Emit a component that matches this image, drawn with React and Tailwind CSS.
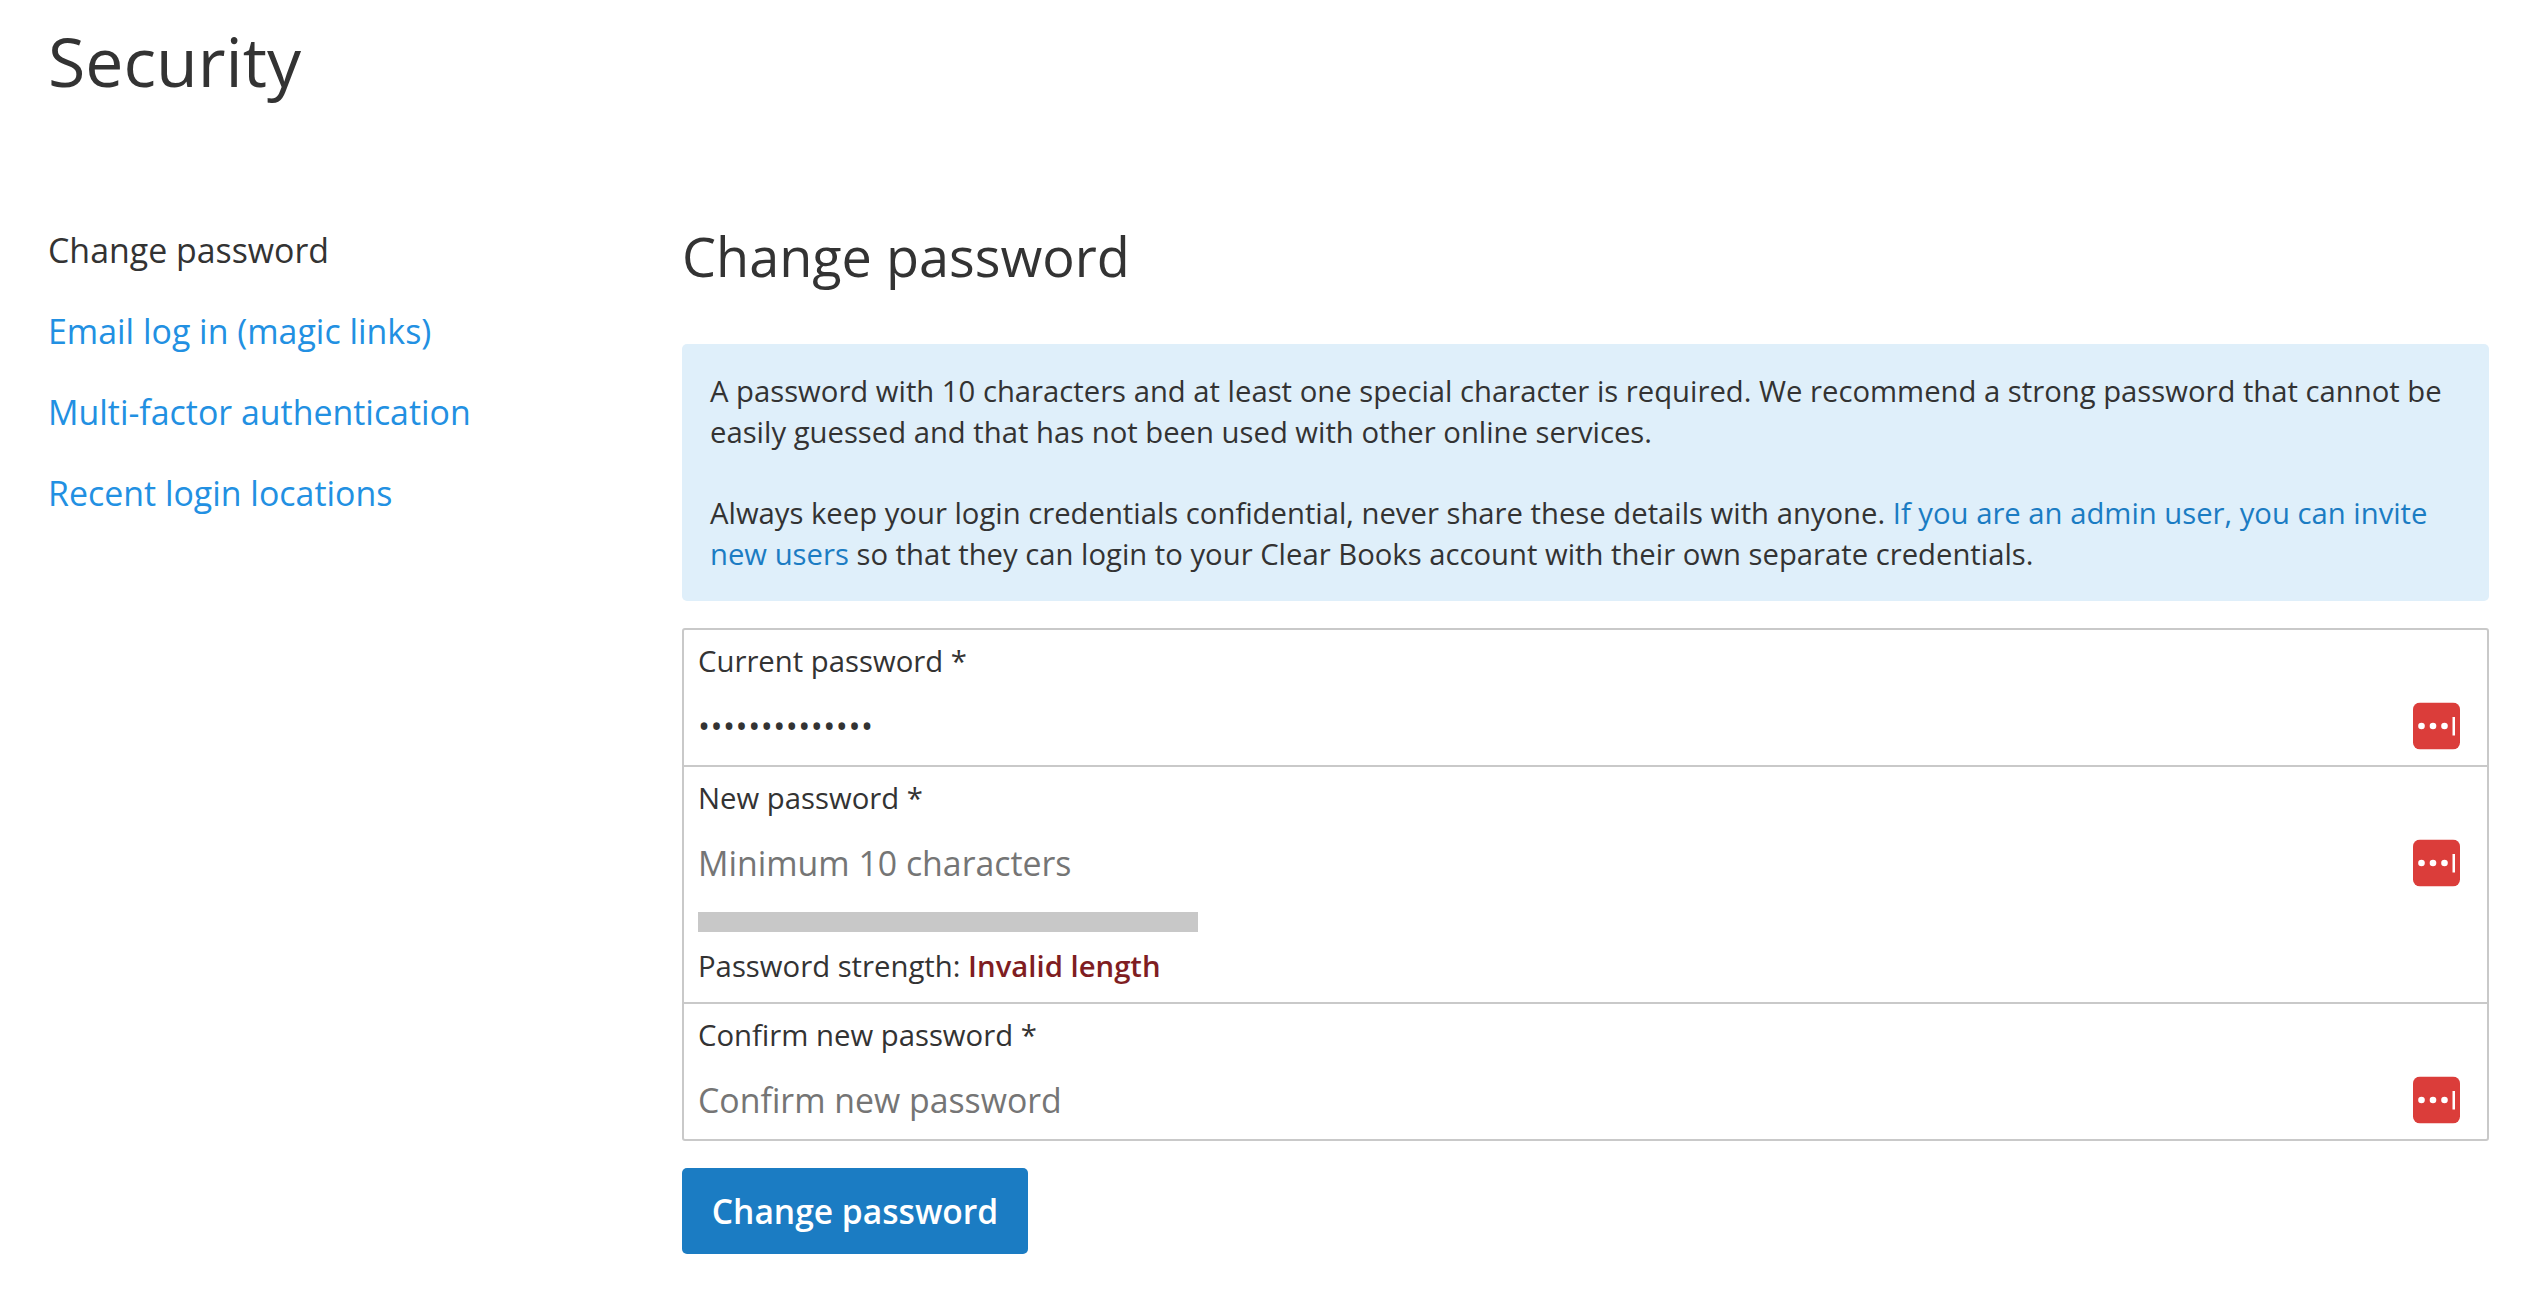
const PasswordIcon = () => (
  <svg className="absolute right-[13px] top-1/2 -translate-y-1/2" width="47" height="47" viewBox="0 0 47 47">
    <rect width="47" height="47" rx="7" fill="#db3d3a" />
    <circle cx="8.5" cy="23.5" r="3.3" fill="#fff" />
    <circle cx="20" cy="23.5" r="3.3" fill="#fff" />
    <circle cx="31.5" cy="23.5" r="3.3" fill="#fff" />
    <rect x="39.5" y="14.5" width="2.5" height="18.5" fill="#fff" />
  </svg>
);

const Field = ({ label, value, placeholder, children, last }) => (
  <div className={`px-[14px] ${last ? '' : 'border-b-2 border-[#c9c9c9]'}`}>
    <label className="block pt-[11px] text-[29.3px] leading-[40px]">{label} *</label>
    <div className="relative mt-[6px] h-[78px]">
      {value ? (
        <span className="flex h-full items-center text-[32px] tracking-[0.5px]">{value}</span>
      ) : (
        <span className="flex h-full items-center text-[33.85px] text-[#757575]">{placeholder}</span>
      )}
      <PasswordIcon />
    </div>
    {children}
  </div>
);

export default function App() {
  return (
    <div className="min-h-[1298px] bg-white pl-[48px] font-['Open_Sans',sans-serif] text-[#333]">
      <h1 className="pt-[16px] text-[68px] leading-[90px]">Security</h1>

      <div className="mt-[119px] flex">
        {/* Side nav */}
        <nav className="flex w-[634px] shrink-0 flex-col gap-[37px] pt-[3px] text-[33.9px] leading-[44px] text-[#2290e2]">
          <span className="text-[#333]">Change password</span>
          <a>Email log in (magic links)</a>
          <a>Multi-factor authentication</a>
          <a>Recent login locations</a>
        </nav>

        <div className="w-[1807px]">
          <h2 className="text-[54px] leading-[62px]">Change password</h2>

          <div className="mt-[57px] rounded-[5px] bg-[#dfeffa] px-[28px] pt-[27px] pb-[27px] text-[29.25px] leading-[40.5px]">
            <p>
              A password with 10 characters and at least one special character is required. We recommend a strong password that cannot be easily guessed and that has not been used with other online services.
            </p>
            <p className="mt-[41px]">
              Always keep your login credentials confidential, never share these details with anyone.{' '}
              <a className="text-[#1b7cc3]">If you are an admin user, you can invite new users</a>{' '}
              so that they can login to your Clear Books account with their own separate credentials.
            </p>
          </div>

          <div className="mt-[27px] rounded-[3px] border-2 border-[#c9c9c9]">
            <Field label="Current password" value="••••••••••••••" />
            <Field label="New password" placeholder="Minimum 10 characters">
              <div className="mt-[10px] h-[20px] w-[500px] bg-[#c8c8c8]" />
              <p className="pt-[13px] pb-[15px] text-[29.3px] leading-[42px]">
                Password strength: <strong className="font-semibold text-[#7f1d22]">Invalid length</strong>
              </p>
            </Field>
            <Field label="Confirm new password" placeholder="Confirm new password" last />
          </div>

          <button className="mt-[27px] h-[86px] w-[346px] rounded-[5px] bg-[#1b7cc3] text-[33.6px] font-semibold text-white">
            Change password
          </button>
        </div>
      </div>
    </div>
  );
}
